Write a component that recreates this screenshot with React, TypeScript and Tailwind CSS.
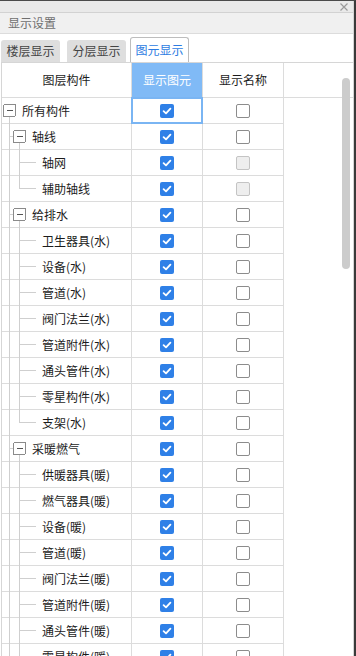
import React from "react";

type Row = {
  label: string;
  level: 0 | 1 | 2;
  last?: boolean;
  disabled?: boolean;
};

const rows: Row[] = [
  { label: "所有构件", level: 0 },
  { label: "轴线", level: 1 },
  { label: "轴网", level: 2, disabled: true },
  { label: "辅助轴线", level: 2, last: true, disabled: true },
  { label: "给排水", level: 1 },
  { label: "卫生器具(水)", level: 2 },
  { label: "设备(水)", level: 2 },
  { label: "管道(水)", level: 2 },
  { label: "阀门法兰(水)", level: 2 },
  { label: "管道附件(水)", level: 2 },
  { label: "通头管件(水)", level: 2 },
  { label: "零星构件(水)", level: 2 },
  { label: "支架(水)", level: 2, last: true },
  { label: "采暖燃气", level: 1 },
  { label: "供暖器具(暖)", level: 2 },
  { label: "燃气器具(暖)", level: 2 },
  { label: "设备(暖)", level: 2 },
  { label: "管道(暖)", level: 2 },
  { label: "阀门法兰(暖)", level: 2 },
  { label: "管道附件(暖)", level: 2 },
  { label: "通头管件(暖)", level: 2 },
  { label: "零星构件(暖)", level: 2 },
];

const LINE = "#cfcfcf";
const BOX = "#8a8a8a";

function Guides({ row }: { row: Row }) {
  return (
    <svg
      width="40"
      height="26"
      viewBox="0 0 40 26"
      className="absolute left-0 top-0"
      shapeRendering="crispEdges"
    >
      {row.level === 0 && (
        <>
          <line x1="7.5" y1="18.5" x2="7.5" y2="26" stroke={LINE} />
          <rect x="1.5" y="6.5" width="12" height="12" rx="1.5" fill="#fff" stroke={BOX} />
          <line x1="4.5" y1="12.5" x2="10.5" y2="12.5" stroke="#555" />
        </>
      )}
      {row.level === 1 && (
        <>
          <line x1="7.5" y1="0" x2="7.5" y2="26" stroke={LINE} />
          <line x1="7.5" y1="12.5" x2="11.5" y2="12.5" stroke={LINE} />
          <line x1="17.5" y1="18.5" x2="17.5" y2="26" stroke={LINE} />
          <rect x="11.5" y="6.5" width="12" height="12" rx="1.5" fill="#fff" stroke={BOX} />
          <line x1="14.5" y1="12.5" x2="20.5" y2="12.5" stroke="#555" />
        </>
      )}
      {row.level === 2 && (
        <>
          <line x1="7.5" y1="0" x2="7.5" y2="26" stroke={LINE} />
          <line x1="17.5" y1="0" x2="17.5" y2={row.last ? "12.5" : "26"} stroke={LINE} />
          <line x1="17.5" y1="12.5" x2="34" y2="12.5" stroke={LINE} />
        </>
      )}
    </svg>
  );
}

function Checked() {
  return (
    <span className="flex h-[14px] w-[14px] items-center justify-center rounded-[2px] bg-[#2f80e7]">
      <svg width="10" height="10" viewBox="0 0 10 10">
        <path d="M1.6 5.2 L4 7.4 L8.4 2.6" fill="none" stroke="#fff" strokeWidth="1.8" strokeLinecap="round" strokeLinejoin="round" />
      </svg>
    </span>
  );
}

function Unchecked({ disabled }: { disabled?: boolean }) {
  return disabled ? (
    <span className="block h-[14px] w-[14px] rounded-[2px] border border-[#c4c4c4] bg-[#eeeeee]" />
  ) : (
    <span className="block h-[14px] w-[14px] rounded-[2px] border border-[#8c8c8c] bg-white" />
  );
}

export default function App() {
  const pad = (l: number) => (l === 0 ? "pl-[20px]" : l === 1 ? "pl-[30px]" : "pl-[40px]");
  return (
    <div
      className="relative flex h-[656px] w-[356px] flex-col overflow-hidden border-r-2 border-t border-r-[#3a3a3a] border-t-[#4a4a4a] bg-white text-[12px] text-[#1c1c1c]"
      style={{ fontFamily: '"Noto Sans CJK SC", "Noto Sans", sans-serif' }}
    >
      <div className="flex h-full flex-col border-r border-r-[#d4d4d4]">
        {/* title strip */}
        <div className="flex h-[12px] shrink-0 items-center justify-end border-b border-b-[#d2d2d2] bg-[#e9e9e9] pr-[5px]">
          <svg width="8" height="8" viewBox="0 0 8 8">
            <path d="M0.5 0.5 L7.5 7.5 M7.5 0.5 L0.5 7.5" stroke="#9a9a9a" strokeWidth="1.2" />
          </svg>
        </div>
        {/* header */}
        <div className="flex h-[21px] shrink-0 items-center border-b border-b-[#dcdcdc] bg-[#f0f0f0] pl-[8px] text-[12px] leading-none text-[#6f6f6f]">
          显示设置
        </div>
        {/* tabs */}
        <div className="flex h-[28px] shrink-0 items-end pl-[1px]">
          <div className="flex h-[22px] w-[59px] items-center justify-center rounded-t-[3px] bg-[#dedede] leading-none text-[#444]">
            楼层显示
          </div>
          <div className="ml-[7px] flex h-[22px] w-[59px] items-center justify-center rounded-t-[3px] bg-[#dedede] leading-none text-[#444]">
            分层显示
          </div>
          <div className="ml-[4px] flex h-[25px] w-[59px] items-center justify-center rounded-t-[3px] border border-b-0 border-[#bdbdbd] bg-white pb-[1px] leading-none text-[#2d7ce2]">
            图元显示
          </div>
        </div>
        {/* table */}
        <div className="flex-1 pl-[1px]">
          <div className="border-l border-t border-[#d6d6d6]">
            <div className="flex h-[35px] border-b border-b-[#dcdcdc]">
              <div className="flex w-[130px] items-center justify-center border-r border-r-[#dcdcdc]">图层构件</div>
              <div className="flex w-[71px] items-center justify-center border-r border-r-[#dcdcdc] bg-[#80baf6] text-white">显示图元</div>
              <div className="flex w-[81px] items-center justify-center border-r border-r-[#dcdcdc]">显示名称</div>
            </div>
            {rows.map((r, i) => (
              <div key={i} className="flex h-[26px]">
                <div className={`relative flex w-[130px] items-center border-b border-r border-[#dcdcdc] ${pad(r.level)}`}>
                  <Guides row={r} />
                  <span className="relative">{r.label}</span>
                </div>
                <div className="relative flex w-[71px] items-center justify-center border-b border-r border-[#dcdcdc]">
                  <Checked />
                  {i === 0 && (
                    <span className="absolute -bottom-px -left-px -right-px -top-px border-2 border-[#7ab5f3]" />
                  )}
                </div>
                <div className="flex w-[81px] items-center justify-center border-b border-r border-[#dcdcdc]">
                  <Unchecked disabled={r.disabled} />
                </div>
              </div>
            ))}
          </div>
        </div>
      </div>
      {/* scrollbar */}
      <div className="absolute left-[342px] top-[77px] h-[191px] w-[8px] rounded-full bg-[#cccccc]" />
    </div>
  );
}
